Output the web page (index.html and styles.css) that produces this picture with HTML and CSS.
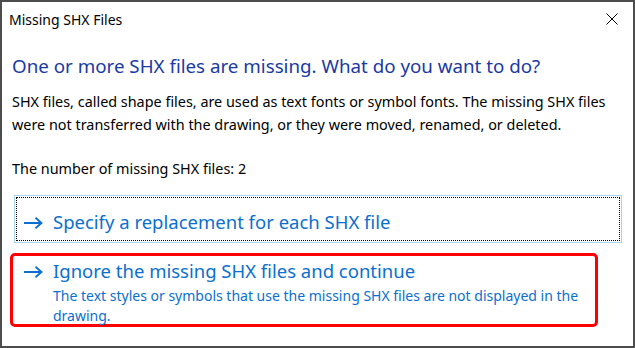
FILE: index.html
```html
<!DOCTYPE html>
<html lang="en">
<head>
  <meta charset="UTF-8">
  <title>Missing SHX Files</title>
  <link rel="stylesheet" href="styles.css">
</head>
<body>
  <div class="window">
    <div class="titlebar">
      <span class="title">Missing SHX Files</span>
      <svg class="close" width="12" height="12" viewBox="0 0 12 12">
        <path d="M0.5 0.5 L11.5 11.5 M11.5 0.5 L0.5 11.5" stroke="#000" stroke-width="1" fill="none"/>
      </svg>
    </div>

    <div class="content">
      <h1 class="instruction">One or more SHX files are missing. What do you want to do?</h1>
      <p class="text">SHX files, called shape files, are used as text fonts or symbol fonts. The missing SHX files were not transferred with the drawing, or they were moved, renamed, or deleted.</p>
      <p class="text count">The number of missing SHX files: 2</p>

      <div class="command focused">
        <svg class="arrow" width="20" height="12" viewBox="0 0 20 12">
          <path d="M1 6 H18.5 M12.5 0.8 L18.5 6 L12.5 11.2" stroke="#0a6fd0" stroke-width="1.8" fill="none"/>
        </svg>
        <div class="command-text">
          <div class="command-title">Specify a replacement for each SHX file</div>
        </div>
      </div>

      <div class="command marked">
        <svg class="arrow" width="20" height="12" viewBox="0 0 20 12">
          <path d="M1 6 H18.5 M12.5 0.8 L18.5 6 L12.5 11.2" stroke="#0a6fd0" stroke-width="1.8" fill="none"/>
        </svg>
        <div class="command-text">
          <div class="command-title">Ignore the missing SHX files and continue</div>
          <div class="command-note">The text styles or symbols that use the missing SHX files are not displayed in the drawing.</div>
        </div>
      </div>
    </div>
  </div>
</body>
</html>
```

FILE: styles.css
```css
body {
  margin: 0;
  font-family: "Noto Sans", "Open Sans", sans-serif;
  background: #ffffff;
}

.window {
  width: 635px;
  height: 348px;
  box-sizing: border-box;
  border: 2px solid #4d4d4d;
  background: #ffffff;
}

.titlebar {
  height: 34px;
  display: flex;
  align-items: center;
  justify-content: space-between;
  padding: 0 15px 0 7px;
}

.title {
  font-size: 14px;
  color: #000000;
}

.content {
  padding: 0 10px 0 10px;
}

.instruction {
  margin: 17px 0 0 0;
  font-size: 18.75px;
  font-weight: normal;
  color: #1a3aa3;
  line-height: 26px;
}

.text {
  margin: 11px 0 0 0;
  font-size: 14.4px;
  line-height: 23px;
  color: #000000;
}

.count {
  margin-top: 21px;
}

.command {
  display: flex;
  align-items: flex-start;
  box-sizing: border-box;
}

.arrow {
  flex: none;
  margin: 0 10px 0 0;
}

.command-title {
  font-size: 18.5px;
  color: #0a6fd0;
  line-height: 26px;
}

.command-note {
  margin-top: 2px;
  font-size: 14px;
  color: #0a6fd0;
  line-height: 20px;
}

.focused {
  margin: 15px 0 0 2px;
  width: 608px;
  height: 48px;
  border: 1px solid #a9d6ee;
  outline: 1px dotted #000000;
  outline-offset: -3px;
  padding: 13px 0 0 8px;
}

.focused .arrow {
  margin-top: 8px;
}

.marked {
  margin: 10px 0 0 -2px;
  width: 588px;
  height: 74px;
  border: 3px solid #ff0000;
  border-radius: 5px;
  padding: 2px 0 0 10px;
}

.marked .arrow {
  margin-top: 8px;
}
```
